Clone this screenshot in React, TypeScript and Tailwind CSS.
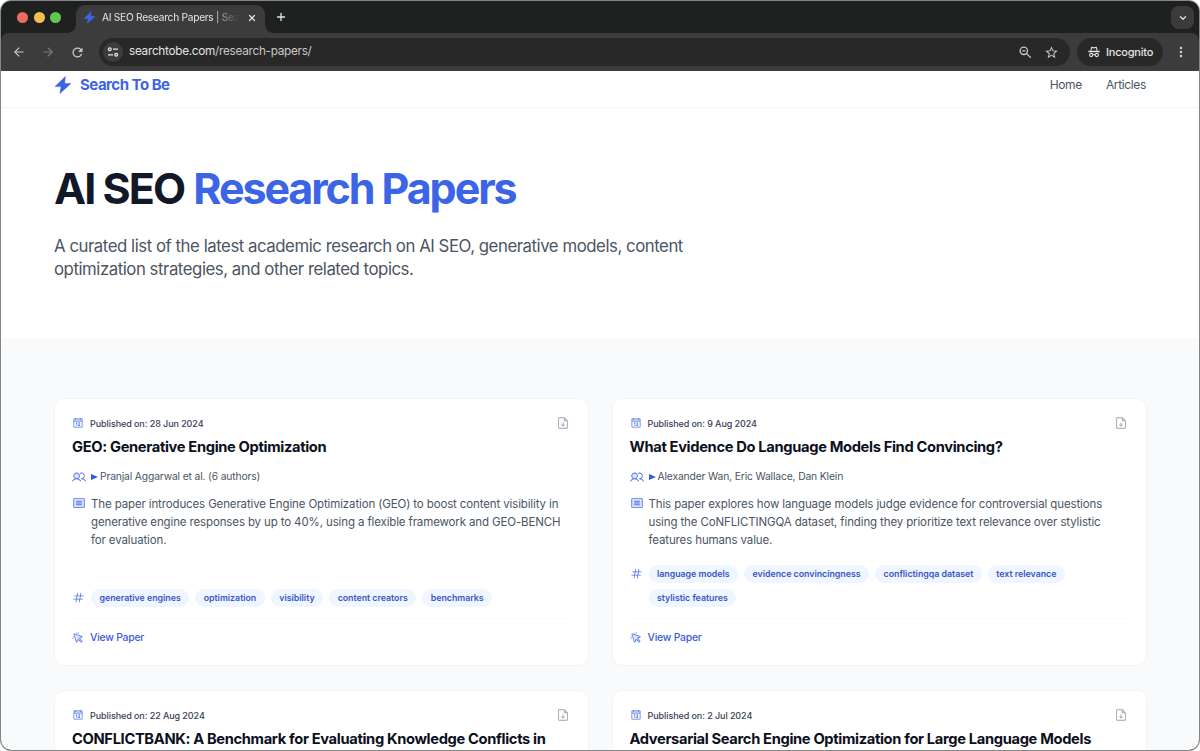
import type { ReactNode } from "react"
import { LuArrowLeft, LuArrowRight, LuChevronDown, LuPlus, LuX } from "react-icons/lu"
import { MdMoreVert, MdRefresh, MdStarBorder } from "react-icons/md"
import {
  PiArticleDuotone,
  PiCalendarDuotone,
  PiCursorClickDuotone,
  PiFileArrowDownDuotone,
  PiHash,
  PiUsersDuotone,
} from "react-icons/pi"

type Paper = {
  date: string
  title: string
  authors: string
  summary: string[]
  tags: string[]
}

const papers: Paper[] = [
  {
    date: "28 Jun 2024",
    title: "GEO: Generative Engine Optimization",
    authors: "Pranjal Aggarwal et al. (6 authors)",
    summary: [
      "The paper introduces Generative Engine Optimization (GEO) to boost content visibility in",
      "generative engine responses by up to 40%, using a flexible framework and GEO-BENCH",
      "for evaluation.",
    ],
    tags: ["generative engines", "optimization", "visibility", "content creators", "benchmarks"],
  },
  {
    date: "9 Aug 2024",
    title: "What Evidence Do Language Models Find Convincing?",
    authors: "Alexander Wan, Eric Wallace, Dan Klein",
    summary: [
      "This paper explores how language models judge evidence for controversial questions",
      "using the CoNFLICTINGQA dataset, finding they prioritize text relevance over stylistic",
      "features humans value.",
    ],
    tags: [
      "language models",
      "evidence convincingness",
      "conflictingqa dataset",
      "text relevance",
      "stylistic features",
    ],
  },
  {
    date: "22 Aug 2024",
    title: "CONFLICTBANK: A Benchmark for Evaluating Knowledge Conflicts in",
    authors: "",
    summary: [],
    tags: [],
  },
  {
    date: "2 Jul 2024",
    title: "Adversarial Search Engine Optimization for Large Language Models",
    authors: "",
    summary: [],
    tags: [],
  },
]

function Bolt({ className }: { className: string }) {
  return (
    <svg viewBox="0 0 18 18" className={className} fill="currentColor">
      <path d="M11.3.6 1 10.6h6.1L5.9 17.4 17 7.4h-6.3z" stroke="currentColor" strokeWidth="0.5" strokeLinejoin="round" />
    </svg>
  )
}

function TuneIcon() {
  return (
    <svg viewBox="0 0 12 12" className="size-3" fill="none" stroke="currentColor" strokeWidth="1.3">
      <circle cx="2.8" cy="3.2" r="1.4" />
      <path d="M6 3.2h5M1 8.8h5" />
      <circle cx="9.2" cy="8.8" r="1.4" />
    </svg>
  )
}

function IncognitoIcon() {
  return (
    <svg viewBox="0 0 12 12" className="size-3" fill="none" stroke="currentColor" strokeWidth="1.1">
      <path d="M2.9 4.7 3.6 1.3l2.4.6 2.4-.6.7 3.4" strokeLinejoin="round" />
      <path d="M.3 5.5h11.4" strokeWidth="1.3" />
      <circle cx="3.2" cy="9" r="1.6" />
      <circle cx="8.8" cy="9" r="1.6" />
      <path d="M4.8 8.8q1.2-.7 2.4 0" />
    </svg>
  )
}

function ZoomOutIcon() {
  return (
    <svg viewBox="0 0 15 15" className="size-[15px]" fill="none" stroke="currentColor" strokeWidth="1.3">
      <circle cx="5.8" cy="5.8" r="3.7" />
      <path d="M8.6 8.6 12.8 12.8M4.2 5.8h3.2" />
    </svg>
  )
}

function Browser({ children }: { children: ReactNode }) {
  return (
    <div className="flex h-[751px] w-[1200px] flex-col overflow-hidden rounded-[11px] border border-[#858786] bg-[#1f2120] font-['Inter',sans-serif] text-[#e3e3e3]">
      <div className="flex h-8 shrink-0 items-start">
        <div className="flex w-[67px] gap-[5.5px] pt-[11px] pl-4">
          <span className="size-[11px] rounded-full bg-[#ed6a5e]" />
          <span className="size-[11px] rounded-full bg-[#f5bf4f]" />
          <span className="size-[11px] rounded-full bg-[#61c554]" />
        </div>
        <div className="mt-1 flex h-7 items-end">
          <span className="size-2 bg-[radial-gradient(circle_at_top_left,transparent_7.5px,#3c3c3c_8px)]" />
          <div className="flex h-7 w-[189px] items-center rounded-t-[9px] bg-[#3c3c3c] pr-2 pb-[3px] pl-[7px]">
            <Bolt className="size-[13px] shrink-0 text-[#3b64e6]" />
            <span className="ml-[6px] w-[138px] text-[10.2px] tracking-[-0.27px] whitespace-nowrap [mask-image:linear-gradient(to_right,black_80%,transparent)]">
              AI SEO Research Papers | Sea
            </span>
            <LuX className="ml-2 size-[10px] shrink-0" strokeWidth={3} />
          </div>
          <span className="size-2 bg-[radial-gradient(circle_at_top_right,transparent_7.5px,#3c3c3c_8px)]" />
        </div>
        <LuPlus className="mt-[10px] ml-[2px] size-3" strokeWidth={2.6} />
        <span className="mt-[5px] mr-[5px] ml-auto flex size-[23px] items-center justify-center rounded-[8px] bg-[#3a3b3a]">
          <LuChevronDown className="size-[10px]" strokeWidth={3} />
        </span>
      </div>
      <div className="flex h-[38px] shrink-0 items-center rounded-t-[8px] bg-[#3c3c3c]">
        <LuArrowLeft className="ml-[11px] size-[14px] text-[#c7c7c7]" />
        <LuArrowRight className="ml-[15px] size-[14px] text-[#7b7b7b]" />
        <MdRefresh className="ml-[15px] size-[15px] text-[#c7c7c7]" />
        <div className="ml-[14px] flex h-[28px] w-[971px] items-center rounded-full bg-[#282828] pr-[11px] pl-1">
          <span className="flex size-5 items-center justify-center rounded-full bg-[#3c3c3c]">
            <TuneIcon />
          </span>
          <span className="ml-[6px] text-[11.8px] tracking-[-0.3px]">
            searchtobe.com<span className="text-[#c7c7c7]">/research-papers/</span>
          </span>
          <span className="ml-auto text-[#c7c7c7]">
            <ZoomOutIcon />
          </span>
          <MdStarBorder className="ml-[11px] size-[15px] text-[#c7c7c7]" />
        </div>
        <div className="ml-[7px] flex h-[28px] w-[86px] items-center rounded-full bg-[#282828] pl-[11px]">
          <IncognitoIcon />
          <span className="ml-[6px] text-[11px] font-medium tracking-[-0.22px]">Incognito</span>
        </div>
        <MdMoreVert className="ml-[10px] size-4 text-[#c7c7c7]" />
      </div>
      {children}
    </div>
  )
}

function PaperCard({ paper }: { paper: Paper }) {
  return (
    <article className="flex h-[268px] w-[535px] flex-col rounded-[10px] border border-[#f1f3f6] bg-white px-[17px] pt-[17px] shadow-[0_1px_2px_rgba(0,0,0,0.01)]">
      <div className="flex h-[15px] items-center text-[9px] font-medium text-[#374151]">
        <PiCalendarDuotone className="mb-[1px] size-3 text-[#4f74e8]" />
        <span className="ml-[6px] tracking-[-0.08px] whitespace-nowrap">Published on: {paper.date}</span>
        <PiFileArrowDownDuotone className="mr-[1px] mb-[1px] ml-auto size-[14px] text-[#9ca3af]" />
      </div>
      <h2 className="mt-[5px] h-[22px] text-[14.7px] leading-[22px] font-bold tracking-[-0.34px] whitespace-nowrap text-[#0b1020]">
        {paper.title}
      </h2>
      {paper.tags.length > 0 && (
        <>
          <div className="mt-[10px] flex h-[17px] items-center text-[10.3px] text-[#4b5563]">
            <PiUsersDuotone className="size-[14px] text-[#4f74e8]" />
            <span className="ml-[5px] border-y-[3.5px] border-l-[7px] border-y-transparent border-l-[#2f5be8]" />
            <span className="ml-[2px] tracking-[-0.14px] whitespace-nowrap">{paper.authors}</span>
          </div>
          <div className="mt-[11px] flex text-[11.5px] leading-[17.8px] text-[#4b5563]">
            <PiArticleDuotone className="size-[14px] shrink-0 text-[#4f74e8]" />
            <p className="ml-[5px] tracking-[-0.13px]">
              {paper.summary.map((line) => (
                <span key={line} className="block whitespace-nowrap">
                  {line}
                </span>
              ))}
            </p>
          </div>
          <div className="mt-auto mr-[2px] flex border-b border-[#f9fafb] pb-[11px]">
            <PiHash className="mt-[2px] size-[13px] shrink-0 text-[#4f74e8]" />
            <div className="ml-[6px] flex flex-wrap gap-x-[6px] gap-y-[6px]">
              {paper.tags.map((tag) => (
                <span
                  key={tag}
                  className="flex h-[18px] items-center rounded-full bg-[#eff6ff] px-[8.5px] text-[8.8px] font-semibold tracking-[-0.01px] whitespace-nowrap text-[#3b55c9]"
                >
                  {tag}
                </span>
              ))}
            </div>
          </div>
          <a className="mt-[10px] mb-[18px] flex h-[18px] items-center text-[10.4px] font-medium text-[#3b5bdb]">
            <PiCursorClickDuotone className="size-3 text-[#4f74e8]" />
            <span className="ml-[6px] tracking-[-0.23px]">View Paper</span>
          </a>
        </>
      )}
    </article>
  )
}

export default function App() {
  return (
    <Browser>
      <main className="flex flex-1 flex-col overflow-hidden bg-[#f8fafc]">
        <header className="flex h-[37px] shrink-0 items-start border-b border-[#f6f7f8] bg-white px-[53px] pt-[5px]">
          <Bolt className="size-[18px] text-[#3b64e6]" />
          <span className="ml-2 text-[15px] leading-[18px] font-bold tracking-[-0.5px] text-[#3b64e6]">Search To Be</span>
          <nav className="ml-auto flex gap-6 text-[12px] leading-[18px] tracking-[-0.35px] text-[#4b5563]">
            <a>Home</a>
            <a>Articles</a>
          </nav>
        </header>
        <section className="h-[231px] shrink-0 bg-white px-[53px] pt-[57px]">
          <h1 className="text-[43px] leading-[46px] font-bold tracking-[-1.95px] whitespace-nowrap text-[#111827]">
            AI SEO <span className="ml-px tracking-[-2.1px] text-[#3b64e6]">Research Papers</span>
          </h1>
          <p className="mt-[24px] text-[16.8px] leading-[23.4px] tracking-[-0.46px] whitespace-nowrap text-[#4b5563]">
            A curated list of the latest academic research on AI SEO, generative models, content
            <br />
            optimization strategies, and other related topics.
          </p>
        </section>
        <section className="grid grid-cols-[535px_535px] gap-x-[22.5px] gap-y-[24px] px-[53px] pt-[59px]">
          {papers.map((paper) => (
            <PaperCard key={paper.title} paper={paper} />
          ))}
        </section>
      </main>
    </Browser>
  )
}
